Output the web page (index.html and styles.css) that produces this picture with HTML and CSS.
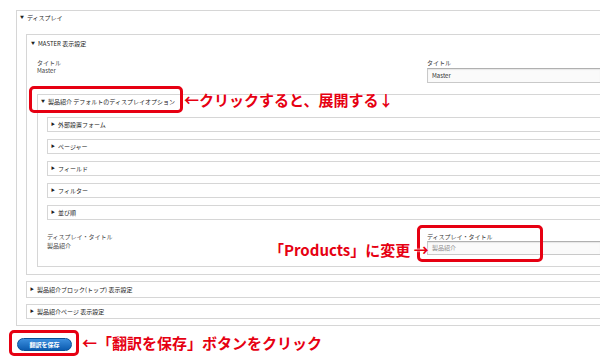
FILE: index.html
```html
<!DOCTYPE html>
<html>
<head>
  <meta charset="utf-8">
  <title>翻訳 - ディスプレイ</title>
  <link rel="stylesheet" href="styles.css">
</head>
<body>
  <div class="page">
    <section class="panel outer">
      <div class="summary open">ディスプレイ</div>
      <div class="panel-body outer-body">
        <section class="panel master">
          <div class="summary open">MASTER 表示設定</div>
          <div class="panel-body master-body">
            <div class="field-row wide">
              <div class="source">
                <div>タイトル</div>
                <div>Master</div>
              </div>
              <div class="translation">
                <div class="label">タイトル</div>
                <div class="input">Master</div>
              </div>
            </div>
            <section class="panel defaults">
              <div class="summary open">製品紹介 デフォルトのディスプレイオプション</div>
              <div class="panel-body defaults-body">
                <div class="panel closed"><div class="summary">外部設置フォーム</div></div>
                <div class="panel closed"><div class="summary">ページャー</div></div>
                <div class="panel closed"><div class="summary">フィールド</div></div>
                <div class="panel closed"><div class="summary">フィルター</div></div>
                <div class="panel closed"><div class="summary">並び順</div></div>
                <div class="field-row narrow">
                  <div class="source">
                    <div>ディスプレイ・タイトル</div>
                    <div>製品紹介</div>
                  </div>
                  <div class="translation">
                    <div class="label">ディスプレイ・タイトル</div>
                    <div class="input empty">製品紹介</div>
                  </div>
                </div>
              </div>
            </section>
          </div>
        </section>
        <div class="panel closed block"><div class="summary">製品紹介ブロック(トップ) 表示設定</div></div>
        <div class="panel closed"><div class="summary">製品紹介ページ 表示設定</div></div>
      </div>
    </section>

    <button class="save">翻訳を保存</button>

    <!-- annotations drawn over the screenshot -->
    <div class="mark mark-summary"></div>
    <div class="note note-summary">←クリックすると、展開する↓</div>
    <div class="mark mark-field"></div>
    <div class="note note-field">「Products」に変更 →</div>
    <div class="mark mark-save"></div>
    <div class="note note-save">←「翻訳を保存」ボタンをクリック</div>
  </div>
</body>
</html>
```

FILE: styles.css
```css
html, body {
  margin: 0;
  padding: 0;
  overflow: hidden;
  background: #fff;
}

body {
  width: 600px;
  height: 363px;
  font-family: "Noto Sans CJK JP", "Noto Sans", sans-serif;
  color: #333;
}

.page {
  position: relative;
  padding: 10px 0 0 16px;
}

/* collapsible boxes, cut off by the right edge of the window */
.panel {
  border: 1px solid #d6d6d6;
  border-right: 0;
  background: #fff;
}

.summary {
  font-size: 6px;
  line-height: 13px;
  padding-left: 3px;
  color: #222;
  white-space: nowrap;
}

.summary::before {
  content: "▶";
  display: inline-block;
  font-size: 4px;
  margin-right: 3px;
  vertical-align: 1px;
}

.summary.open::before {
  content: "▼";
}

.panel-body {
  display: flex;
  flex-direction: column;
}

.outer-body {
  gap: 6px;
  padding: 10px 0 6px 9px;
}

.master > .summary {
  line-height: 16px;
  padding-left: 4px;
}

.master-body {
  padding: 7px 0 7px 10px;
}

.defaults {
  margin-top: 11px;
}

.defaults-body {
  gap: 7px;
  padding: 9px 0 11px 9px;
}

.block > .summary {
  line-height: 14px;
}

/* source / translation rows */
.field-row {
  display: grid;
}

.field-row.wide {
  grid-template-columns: 390px 1fr;
}

.field-row.narrow {
  grid-template-columns: 380px 1fr;
  margin-top: 5px;
}

.source, .label {
  font-size: 6px;
  line-height: 8px;
  color: #444;
  white-space: nowrap;
}

.narrow .source, .narrow .label {
  line-height: 9px;
}

.label {
  color: #333;
}

.input {
  box-sizing: border-box;
  height: 15px;
  margin-top: 1px;
  padding-left: 4px;
  border: 1px solid #c9c9c9;
  border-right: 0;
  border-top-color: #b0b0b0;
  background: #fafafa;
  box-shadow: inset 0 1px 1px rgba(0, 0, 0, 0.08);
  font-size: 6px;
  line-height: 13px;
  color: #333;
}

.narrow .input {
  height: 14px;
  margin-top: 0;
  line-height: 12px;
}

.input.empty {
  color: #8a8a8a;
}

button.save {
  display: block;
  box-sizing: border-box;
  width: 55px;
  height: 13px;
  margin: 12px 0 0 1px;
  padding: 0;
  border: 1px solid #0b4f94;
  border-radius: 7px;
  background: linear-gradient(#3b8ede, #0c5cb0);
  color: #fff;
  font-family: "Noto Sans CJK JP", sans-serif;
  font-size: 6px;
  font-weight: bold;
  line-height: 11px;
}

/* red callouts */
.mark {
  position: absolute;
  box-sizing: border-box;
  border: 3px solid #e60012;
  border-radius: 5px;
}

.mark-summary {
  left: 29px;
  top: 86px;
  width: 154px;
  height: 27px;
}

.mark-field {
  left: 417px;
  top: 225px;
  width: 126px;
  height: 37px;
}

.mark-save {
  left: 9px;
  top: 330px;
  width: 70px;
  height: 26px;
}

.note {
  position: absolute;
  font-family: "Noto Sans CJK JP", sans-serif;
  font-size: 15px;
  font-weight: bold;
  line-height: 18px;
  color: #e60012;
  white-space: nowrap;
  text-shadow: 0 0 2px #fff, 0 0 2px #fff;
}

.note-summary {
  left: 184px;
  top: 91px;
}

.note-field {
  left: 269px;
  top: 241px;
}

.note-save {
  left: 82px;
  top: 334px;
}
```
